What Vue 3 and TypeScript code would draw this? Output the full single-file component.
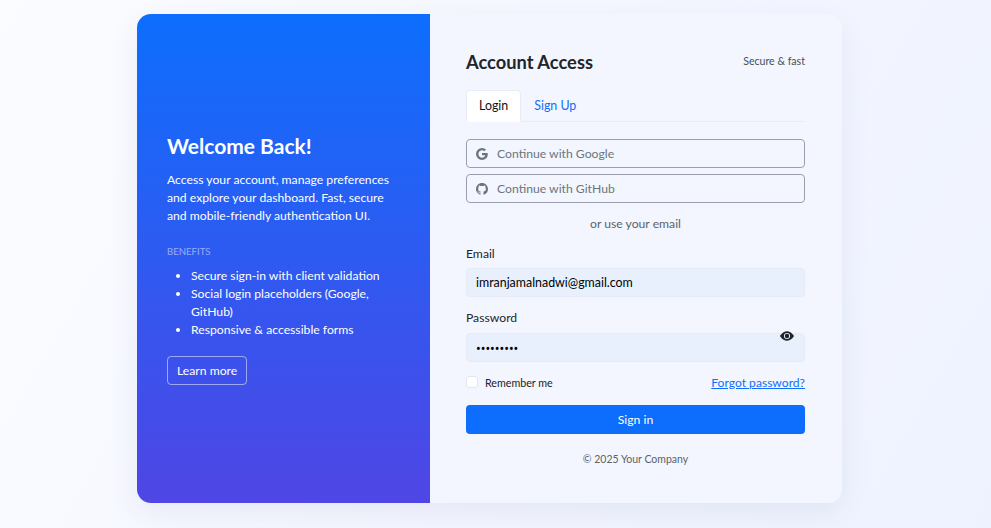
<script setup lang="ts">
const benefits: string[] = [
  'Secure sign-in with client validation',
  'Social login placeholders (Google, GitHub)',
  'Responsive & accessible forms',
]
</script>

<template>
  <main class="page">
    <section class="card">
      <aside class="promo">
        <h1 class="promo-title">Welcome Back!</h1>
        <p class="promo-text">Access your account, manage preferences and explore your dashboard. Fast, secure and mobile-friendly authentication UI.</p>
        <h2 class="benefits-title">BENEFITS</h2>
        <ul class="benefits">
          <li v-for="b in benefits" :key="b">{{ b }}</li>
        </ul>
        <a class="learn" href="#">Learn more</a>
      </aside>
      <div class="panel">
        <header class="head">
          <h2 class="head-title">Account Access</h2>
          <span class="head-note">Secure &amp; fast</span>
        </header>
        <nav class="tabs">
          <span class="tab active">Login</span>
          <span class="tab">Sign Up</span>
        </nav>
        <button class="social" type="button">
          <svg class="social-icon" viewBox="0 0 16 16" fill="currentColor"><path d="M15.545 6.558a9.42 9.42 0 0 1 .139 1.626c0 2.434-.87 4.492-2.384 5.885h.002C11.978 15.292 10.158 16 8 16A8 8 0 1 1 8 0a7.689 7.689 0 0 1 5.352 2.082l-2.284 2.284A4.347 4.347 0 0 0 8 3.166c-2.087 0-3.86 1.408-4.492 3.304a4.792 4.792 0 0 0 0 3.063h.003c.635 1.893 2.405 3.301 4.492 3.301 1.078 0 2.004-.276 2.722-.764h-.003a3.702 3.702 0 0 0 1.599-2.431H8v-3.08h7.545z"/></svg>
          Continue with Google
        </button>
        <button class="social" type="button">
          <svg class="social-icon" viewBox="0 0 16 16" fill="currentColor"><path d="M8 0C3.58 0 0 3.58 0 8c0 3.54 2.29 6.53 5.47 7.59.4.07.55-.17.55-.38 0-.19-.01-.82-.01-1.49-2.01.37-2.53-.49-2.69-.94-.09-.23-.48-.94-.82-1.13-.28-.15-.68-.52-.01-.53.63-.01 1.08.58 1.23.82.72 1.21 1.87.87 2.33.66.07-.52.28-.87.51-1.07-1.78-.2-3.64-.89-3.64-3.95 0-.87.31-1.59.82-2.15-.08-.2-.36-1.02.08-2.12 0 0 .67-.21 2.2.82.64-.18 1.32-.27 2-.27.68 0 1.36.09 2 .27 1.53-1.04 2.2-.82 2.2-.82.44 1.1.16 1.92.08 2.12.51.56.82 1.27.82 2.15 0 3.07-1.87 3.75-3.65 3.95.29.25.54.73.54 1.48 0 1.07-.01 1.93-.01 2.2 0 .21.15.46.55.38A8.012 8.012 0 0 0 16 8c0-4.42-3.58-8-8-8z"/></svg>
          Continue with GitHub
        </button>
        <p class="divider">or use your email</p>
        <label class="label" for="email">Email</label>
        <input id="email" class="field email" type="email" value="imranjamalnadwi@gmail.com" />
        <label class="label label-pw" for="pw">Password</label>
        <div class="pw-wrap">
          <input id="pw" class="field password" type="password" value="password1" />
          <svg class="eye" viewBox="0 0 16 16" fill="currentColor"><path d="M10.5 8a2.5 2.5 0 1 1-5 0 2.5 2.5 0 0 1 5 0z"/><path d="M0 8s3-5.5 8-5.5S16 8 16 8s-3 5.5-8 5.5S0 8 0 8zm8 3.5a3.5 3.5 0 1 0 0-7 3.5 3.5 0 0 0 0 7z"/></svg>
        </div>
        <div class="options">
          <label class="remember"><span class="check"></span>Remember me</label>
          <a class="forgot" href="#">Forgot password?</a>
        </div>
        <button class="submit" type="button">Sign in</button>
        <p class="copy">© 2025 Your Company</p>
      </div>
    </section>
  </main>
</template>

<style>
html, body { margin: 0; }
</style>

<style scoped>
* { box-sizing: border-box; }
.page {
  height: 528px;
  overflow: hidden;
  padding: 14px 149px 25px 137px;
  background: linear-gradient(120deg, #fbfcff 0%, #eef2ff 100%);
  font-family: "Lato", "Open Sans", sans-serif;
  font-size: 12.2px;
  color: #212529;
}
.card {
  display: flex;
  height: 489px;
  border-radius: 14px;
  overflow: hidden;
  background: #f3f6fe;
  box-shadow: 0 10px 30px rgba(50, 60, 120, 0.08);
}
.promo {
  width: 293px;
  flex: none;
  padding: 0 30px 2px;
  display: flex;
  flex-direction: column;
  justify-content: center;
  align-items: flex-start;
  color: #fff;
  background: linear-gradient(180deg, #0d6efd 0%, #4f46e5 100%);
}
.promo-title { margin: 0 0 10px; font-size: 21px; line-height: 30px; font-weight: 700; }
.promo-text { margin: 0 0 19px; line-height: 18px; }
.benefits-title { margin: 0 0 7px; font-size: 9.6px; line-height: 16px; font-weight: 400; color: rgba(255,255,255,.5); }
.benefits { margin: 0 0 17px; padding-left: 24px; line-height: 18px; }
.learn {
  display: block; padding: 0 9px; height: 29px; line-height: 27px;
  border: 1px solid rgba(255,255,255,.5); border-radius: 4px; color: #fff; text-decoration: none;
}
.panel { flex: 1; padding: 34px 37px 0 36px; }
.head { display: flex; justify-content: space-between; align-items: center; height: 28px; margin-bottom: 14px; }
.head-title { margin: 0; font-size: 18.3px; font-weight: 700; line-height: 28px; color: #212529; }
.head-note { padding-bottom: 3px; font-size: 10.6px; color: #495057; }
.tabs { display: flex; height: 32px; border-bottom: 1px solid #e9ecf4; margin-bottom: 17px; }
.tab { height: 32px; padding: 0 12px; line-height: 30px; color: #0d6efd; border: 1px solid transparent; border-radius: 4px 4px 0 0; font-size: 12.4px; }
.tab.active { color: #111; background: #fff; border-color: #e9ecf4 #e9ecf4 #fff; }
.social {
  display: flex; align-items: center; width: 100%; height: 29px; margin-bottom: 6px; padding: 0 9px;
  background: transparent; border: 1px solid #9a9fb0; border-radius: 4px;
  color: #6c757d; font: inherit;
}
.social-icon { width: 12px; height: 12px; margin-right: 9px; }
.divider { margin: 8px 0 0; height: 25px; line-height: 25px; text-align: center; color: #5c636a; }
.label { display: block; margin-top: 8px; height: 24px; line-height: 20px; }
.label-pw { margin-top: 11px; height: 25px; }
.field {
  display: block; width: 100%; height: 29px; padding: 0 9px; border: 1px solid #e6ebf5; border-radius: 4px;
  background: #e8f0fe; color: #000; font: inherit; outline: none;
}
.email { font-size: 12.4px; }
.password { padding-top: 2px; font-family: "Noto Sans", sans-serif; font-size: 12.5px; }
.pw-wrap { position: relative; }
.eye { position: absolute; top: -4px; right: 11px; width: 14px; height: 14px; color: #212529; }
.options { display: flex; justify-content: space-between; align-items: center; margin-top: 12px; height: 16px; }
.remember { display: flex; align-items: center; font-size: 10.7px; }
.check { width: 12px; height: 12px; margin-right: 7px; background: #fff; border: 1px solid #e3e6ee; border-radius: 3px; }
.forgot { color: #0d6efd; text-decoration: underline; font-size: 12.1px; }
.submit {
  display: block; width: 100%; height: 29px; margin-top: 15px; border: 0; border-radius: 4px;
  background: #0d6efd; color: #fff; font: inherit;
}
.copy { margin: 17px 0 0; text-align: center; font-size: 10.5px; color: #5c636a; line-height: 16px; }
</style>
